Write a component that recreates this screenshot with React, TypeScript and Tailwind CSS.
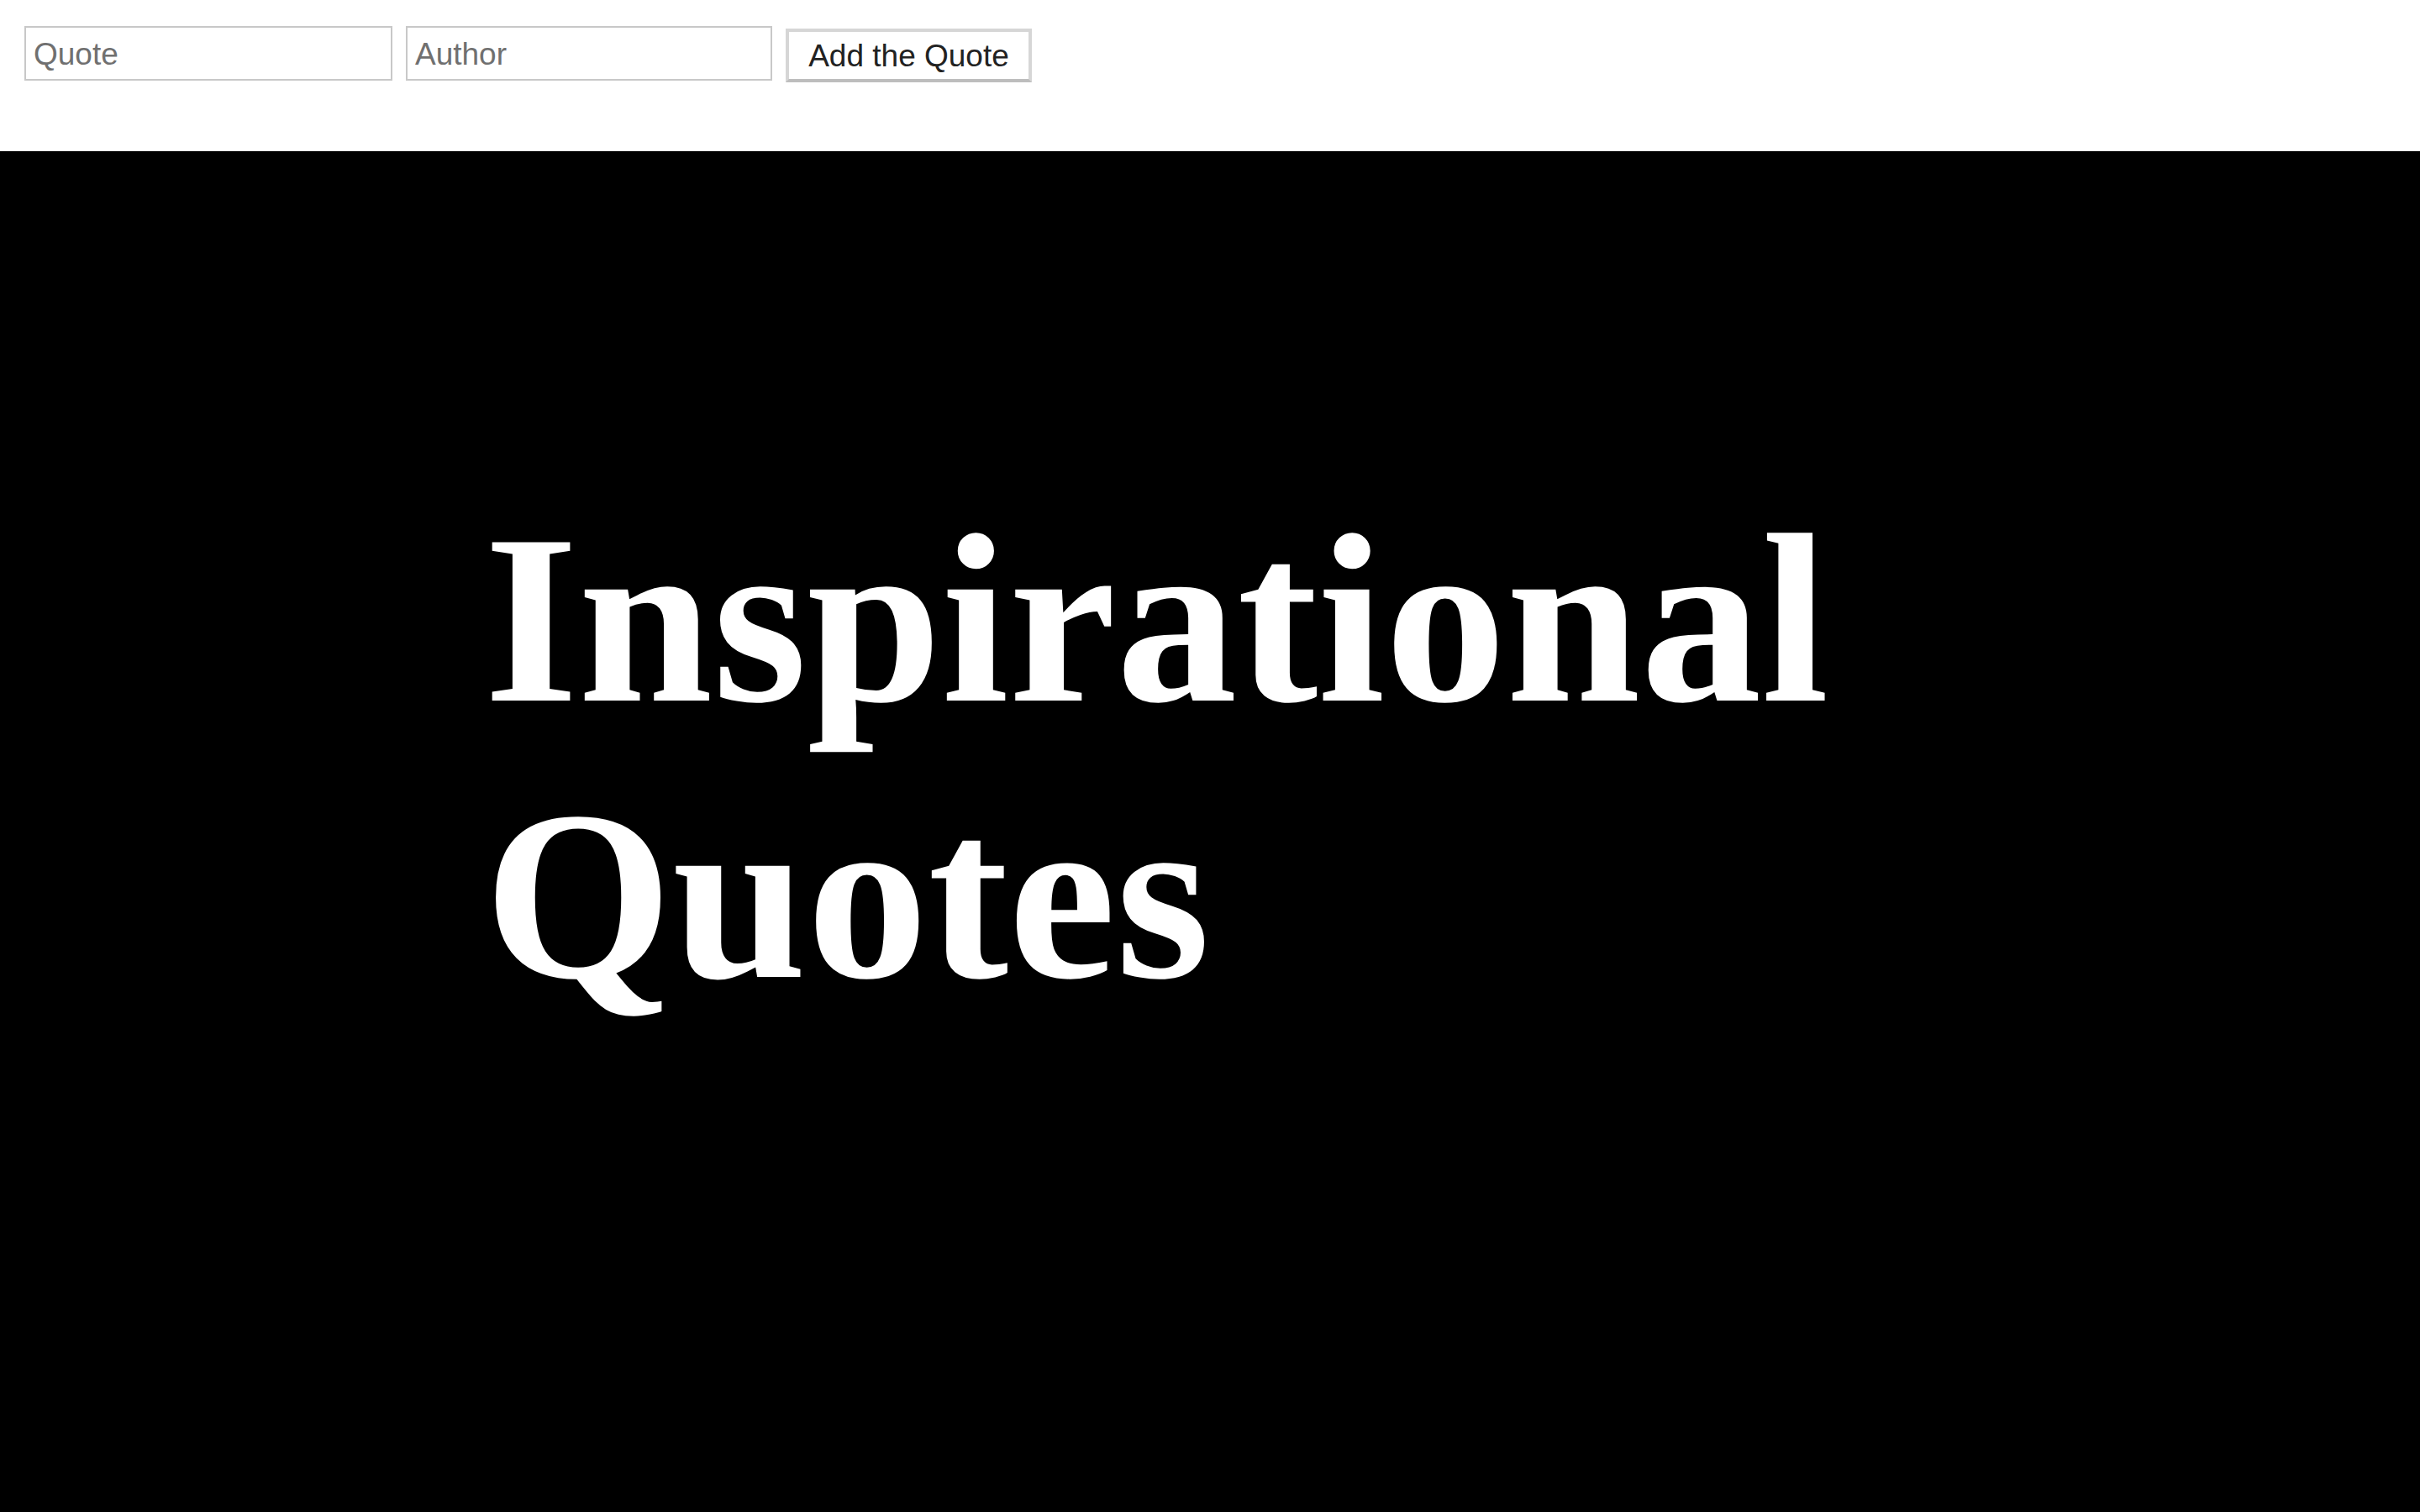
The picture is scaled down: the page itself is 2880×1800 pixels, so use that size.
import React from "react";

export default function App() {
  return (
    <div className="min-h-screen bg-black">
      <div className="h-[180px] bg-white flex items-start gap-4 pl-[29px] pt-[31px] font-['Liberation_Sans',Arial,sans-serif]">
        <input
          placeholder="Quote"
          className="w-[438px] h-[65px] border-2 border-[#c8c8c8] px-[9px] pt-[2px] text-[37px] text-[#222] placeholder:text-[#707070] outline-none bg-white"
        />
        <input
          placeholder="Author"
          className="w-[436px] h-[65px] border-2 border-[#c8c8c8] px-[9px] pt-[2px] text-[37px] text-[#222] placeholder:text-[#707070] outline-none bg-white"
        />
        <button className="mt-[3px] w-[293px] h-[64px] border-4 border-[#d6d6d6] border-b-[#bdbdbd] bg-white text-[37px] text-[#222] leading-none flex items-center justify-center pt-[1px]">
          Add the Quote
        </button>
      </div>
      <div className="bg-black pl-[576px] pt-[392px] pb-[200px]">
        <h1 className="m-0 text-white font-bold text-[288px] leading-[1.143] font-['Liberation_Serif','Times_New_Roman',serif]">
          Inspirational
          <br />
          Quotes
        </h1>
      </div>
    </div>
  );
}
